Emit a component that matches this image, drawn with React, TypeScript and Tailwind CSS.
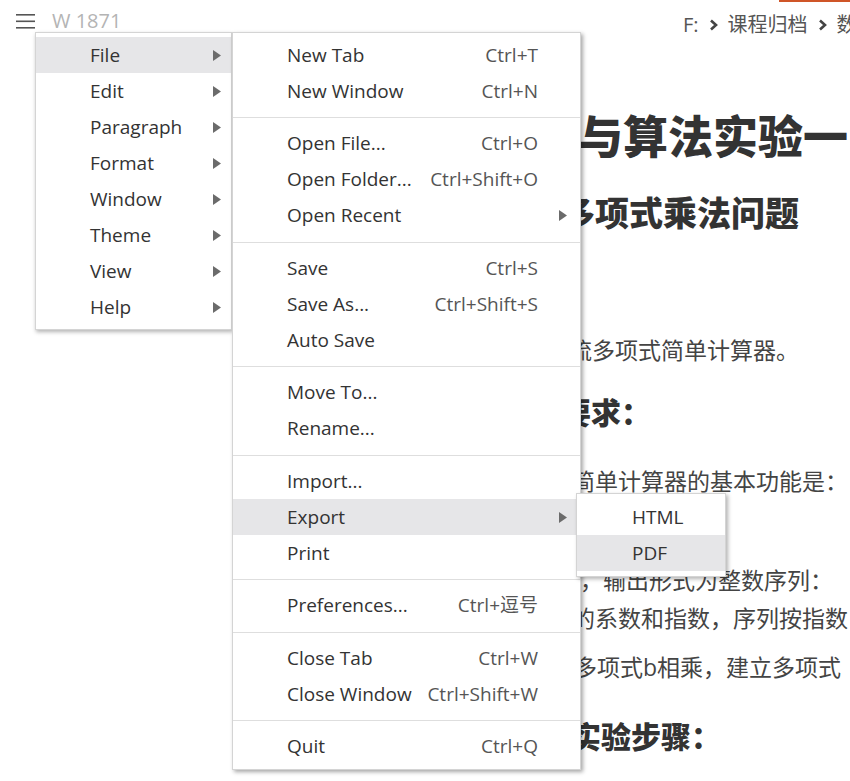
type Item = { label: string; shortcut?: string; sub?: boolean; active?: boolean }

const mainItems = ["File", "Edit", "Paragraph", "Format", "Window", "Theme", "View", "Help"]

const fileGroups: Item[][] = [
  [
    { label: "New Tab", shortcut: "Ctrl+T" },
    { label: "New Window", shortcut: "Ctrl+N" },
  ],
  [
    { label: "Open File...", shortcut: "Ctrl+O" },
    { label: "Open Folder...", shortcut: "Ctrl+Shift+O" },
    { label: "Open Recent", sub: true },
  ],
  [
    { label: "Save", shortcut: "Ctrl+S" },
    { label: "Save As...", shortcut: "Ctrl+Shift+S" },
    { label: "Auto Save" },
  ],
  [{ label: "Move To..." }, { label: "Rename..." }],
  [{ label: "Import..." }, { label: "Export", sub: true, active: true }, { label: "Print" }],
  [{ label: "Preferences...", shortcut: "Ctrl+逗号" }],
  [
    { label: "Close Tab", shortcut: "Ctrl+W" },
    { label: "Close Window", shortcut: "Ctrl+Shift+W" },
  ],
  [{ label: "Quit", shortcut: "Ctrl+Q" }],
]

function Arrow() {
  return (
    <svg width="8" height="11" viewBox="0 0 8 11" className="shrink-0">
      <path d="M0 0 L8 5.5 L0 11 Z" fill="#6b6b6b" />
    </svg>
  )
}

function Crumb() {
  return (
    <svg width="9" height="12" viewBox="0 0 9 12" className="mx-[10px] shrink-0">
      <path d="M2 1.5 L7 6 L2 10.5" fill="none" stroke="#444" strokeWidth="2.6" />
    </svg>
  )
}

function Separator() {
  return <div className="mt-[8px] mb-[7.5px] h-px bg-[#dedede]" />
}

function Hamburger() {
  return (
    <svg width="19" height="15" viewBox="0 0 19 15">
      <rect x="0" y="0" width="19" height="1.6" fill="#555" />
      <rect x="0" y="6.5" width="19" height="1.6" fill="#555" />
      <rect x="0" y="13" width="19" height="1.6" fill="#555" />
    </svg>
  )
}

const menuFont = { fontFamily: '"Open Sans", "Noto Sans CJK SC", sans-serif' }

export default function App() {
  return (
    <div
      className="relative w-[850px] h-[781px] overflow-hidden bg-white text-[#333]"
      style={{ fontFamily: '"Open Sans", "Noto Sans CJK SC", sans-serif' }}
    >
      <div className="flex h-full">
        {/* left top bar */}
        <div className="w-[560px] shrink-0">
          <div className="flex items-center gap-[17px] pl-[16px] pt-[13px]">
            <Hamburger />
            <span className="text-[20px] leading-[16px] text-[#b4b4b4]">W 1871</span>
          </div>
        </div>

        {/* document, partly hidden under the menu */}
        <div className="flex-1 flex flex-col overflow-hidden whitespace-nowrap">
          <div className="ml-[219px] h-[2px] bg-[#cf5528]" />
          <div className="flex items-center h-[30px] mt-[8px] ml-[123px] text-[20px] text-[#555]">
            <span>F:</span>
            <Crumb />
            <span>课程归档</span>
            <Crumb />
            <span>数据结构</span>
          </div>
          <h1 className="mt-[70px] ml-[18px] h-[54px] leading-[54px] text-[45px] font-black text-[#333]">
            与算法实验一
          </h1>
          <h2 className="mt-[29px] ml-[1px] h-[40px] leading-[40px] text-[34px] font-black text-[#333]">
            多项式乘法问题
          </h2>
          <p className="mt-[102px] ml-[9px] h-[30px] leading-[30px] text-[23px] text-[#444]">
            流多项式简单计算器。
          </p>
          <h3 className="mt-[30px] ml-[1px] h-[36px] leading-[36px] text-[30px] font-black text-[#333]">
            要求：
          </h3>
          <p className="mt-[35px] ml-[12px] h-[30px] leading-[30px] text-[23px] text-[#444]">
            简单计算器的基本功能是：
          </p>
          <p className="mt-[69px] ml-[20px] h-[30px] leading-[30px] text-[23px] text-[#444]">
            ，输出形式为整数序列：
          </p>
          <p className="mt-[8px] ml-[12px] h-[30px] leading-[30px] text-[23px] text-[#444]">
            的系数和指数，序列按指数
          </p>
          <p className="mt-[19px] ml-[14px] h-[30px] leading-[30px] text-[23px] text-[#444]">
            多项式b相乘，建立多项式
          </p>
          <h3 className="mt-[37px] ml-[11px] h-[36px] leading-[36px] text-[30px] font-black text-[#333]">
            实验步骤：
          </h3>
        </div>
      </div>

      {/* main menu */}
      <div
        className="absolute left-[35px] top-[32px] w-[197px] py-[4px] bg-white border border-[#d4d4d4] shadow-[1px_2px_4px_rgba(0,0,0,0.3)]"
        style={menuFont}
      >
        {mainItems.map((m, i) => (
          <div
            key={m}
            className={`flex items-center justify-between h-[36px] pl-[54px] pr-[10px] text-[19px] text-[#333] ${
              i === 0 ? "bg-[#e6e6e8]" : ""
            }`}
          >
            <span>{m}</span>
            <Arrow />
          </div>
        ))}
      </div>

      {/* file submenu */}
      <div
        className="absolute left-[232px] top-[32px] w-[349px] py-[4px] bg-white border border-[#d4d4d4] shadow-[2px_2px_4px_rgba(0,0,0,0.35)]"
        style={menuFont}
      >
        {fileGroups.map((group, gi) => (
          <div key={gi}>
            {gi > 0 && <Separator />}
            {group.map((it) => (
              <div
                key={it.label}
                className={`flex items-center justify-between h-[36px] pl-[54px] text-[19px] ${
                  it.sub ? "pr-[13px]" : "pr-[42px]"
                } ${it.active ? "bg-[#e6e6e8]" : ""}`}
              >
                <span className="text-[#333]">{it.label}</span>
                {it.shortcut && <span className="text-[#555]">{it.shortcut}</span>}
                {it.sub && <Arrow />}
              </div>
            ))}
          </div>
        ))}
      </div>

      {/* export submenu */}
      <div
        className="absolute left-[576px] top-[493px] w-[150px] py-[5px] bg-white border border-[#d4d4d4] shadow-[2px_2px_4px_rgba(0,0,0,0.3)]"
        style={menuFont}
      >
        <div className="flex items-center h-[36px] pl-[55px] text-[19px] text-[#333]">HTML</div>
        <div className="flex items-center h-[36px] pl-[55px] text-[19px] text-[#333] bg-[#e6e6e8]">PDF</div>
      </div>
    </div>
  )
}
